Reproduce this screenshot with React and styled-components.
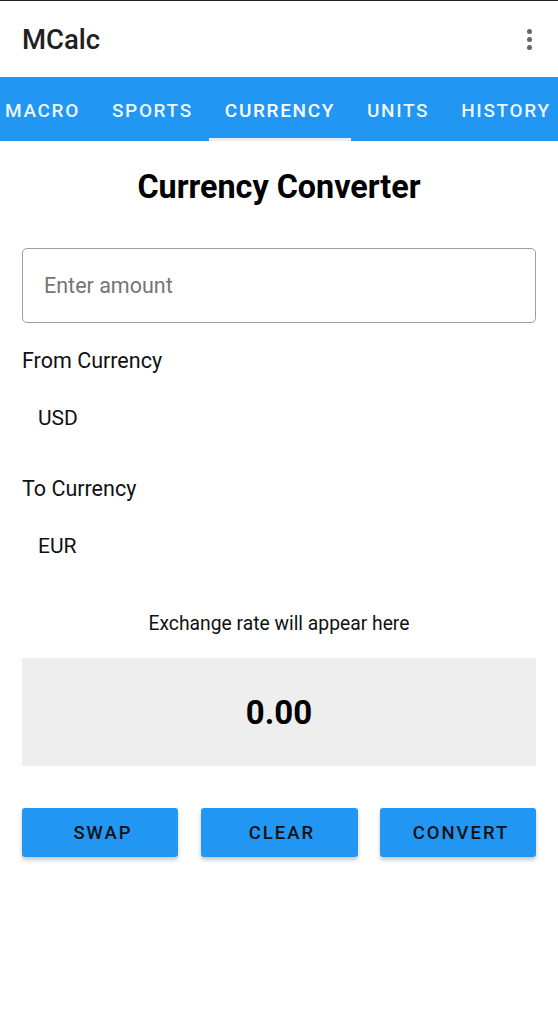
import React from 'react';
import styled, { createGlobalStyle } from 'styled-components';

const GlobalStyle = createGlobalStyle`
  html, body {
    margin: 0;
    padding: 0;
    background: #ffffff;
    font-family: Roboto, "Liberation Sans", sans-serif;
  }
`;

const Screen = styled.div`
  width: 558px;
  min-height: 1029px;
  box-sizing: border-box;
  border-top: 1px solid #222;
  background: #fff;
`;

const AppBar = styled.header`
  height: 76px;
  display: flex;
  align-items: center;
  justify-content: space-between;
  padding: 0 22px;
`;

const Title = styled.h1`
  margin: 0;
  font-size: 27.5px;
  font-weight: 500;
  color: #212121;
`;

const MenuDots = styled.div`
  display: flex;
  flex-direction: column;
  gap: 3px;
  margin-right: 4px;

  span {
    width: 5px;
    height: 5px;
    border-radius: 50%;
    background: #666;
  }
`;

const TabBar = styled.nav`
  height: 64px;
  background: #2196f3;
  display: flex;
  overflow: hidden;
`;

const Tab = styled.div`
  flex-shrink: 0;
  display: flex;
  align-items: center;
  justify-content: center;
  padding: 3px 16px 0;
  margin-left: ${(p) => (p.first ? '-11px' : '0')};
  color: ${(p) => (p.active ? '#fff' : 'rgba(255,255,255,0.93)')};
  font-size: 19px;
  font-weight: 500;
  letter-spacing: 1.65px;
  box-shadow: ${(p) => (p.active ? 'inset 0 -3px 0 #e8eef3' : 'none')};
`;

const Content = styled.main`
  padding: 0 22px;
  display: flex;
  flex-direction: column;
`;

const Heading = styled.h2`
  margin: 27px 0 0;
  text-align: center;
  font-size: 32.3px;
  line-height: 38px;
  font-weight: 700;
  color: #000;
`;

const AmountInput = styled.input`
  margin-top: 42px;
  height: 75px;
  box-sizing: border-box;
  border: 1px solid #9e9e9e;
  border-radius: 5px;
  padding: 0 21px;
  font-family: inherit;
  font-size: 21.5px;
  color: #212121;
  outline: none;

  &::placeholder {
    color: #757575;
  }
`;

const FieldLabel = styled.div`
  margin-top: ${(p) => p.gap}px;
  font-size: 21.5px;
  line-height: 25px;
  color: #111;
`;

const SelectValue = styled.div`
  margin-top: 33px;
  padding-left: 16px;
  font-size: 21px;
  line-height: 25px;
  color: #111;
`;

const RateText = styled.div`
  margin-top: 54px;
  text-align: center;
  font-size: 19.3px;
  line-height: 22px;
  color: #111;
`;

const ResultBox = styled.div`
  margin-top: 23px;
  height: 108px;
  background: #eeeeee;
  display: flex;
  align-items: center;
  justify-content: center;
  font-size: 33px;
  font-weight: 700;
  color: #000;
`;

const ButtonRow = styled.div`
  margin-top: 42px;
  display: grid;
  grid-template-columns: 156px 157px 156px;
  justify-content: space-between;
`;

const ActionButton = styled.button`
  height: 49px;
  border: none;
  border-radius: 3px;
  background: #2196f3;
  color: #111;
  font-family: inherit;
  font-size: 18.5px;
  font-weight: 500;
  letter-spacing: 2px;
  padding: 0 0 0 6px;
  box-shadow: 0 3px 4px rgba(0, 0, 0, 0.22);
`;

const tabs = ['MACRO', 'SPORTS', 'CURRENCY', 'UNITS', 'HISTORY'];

export default function App() {
  return (
    <Screen>
      <GlobalStyle />
      <AppBar>
        <Title>MCalc</Title>
        <MenuDots>
          <span />
          <span />
          <span />
        </MenuDots>
      </AppBar>
      <TabBar>
        {tabs.map((t, i) => (
          <Tab key={t} first={i === 0} active={t === 'CURRENCY'}>
            {t}
          </Tab>
        ))}
      </TabBar>
      <Content>
        <Heading>Currency Converter</Heading>
        <AmountInput placeholder='Enter amount' />
        <FieldLabel gap={25}>From Currency</FieldLabel>
        <SelectValue>USD</SelectValue>
        <FieldLabel gap={45}>To Currency</FieldLabel>
        <SelectValue>EUR</SelectValue>
        <RateText>Exchange rate will appear here</RateText>
        <ResultBox>0.00</ResultBox>
        <ButtonRow>
          <ActionButton>SWAP</ActionButton>
          <ActionButton>CLEAR</ActionButton>
          <ActionButton>CONVERT</ActionButton>
        </ButtonRow>
      </Content>
    </Screen>
  );
}
